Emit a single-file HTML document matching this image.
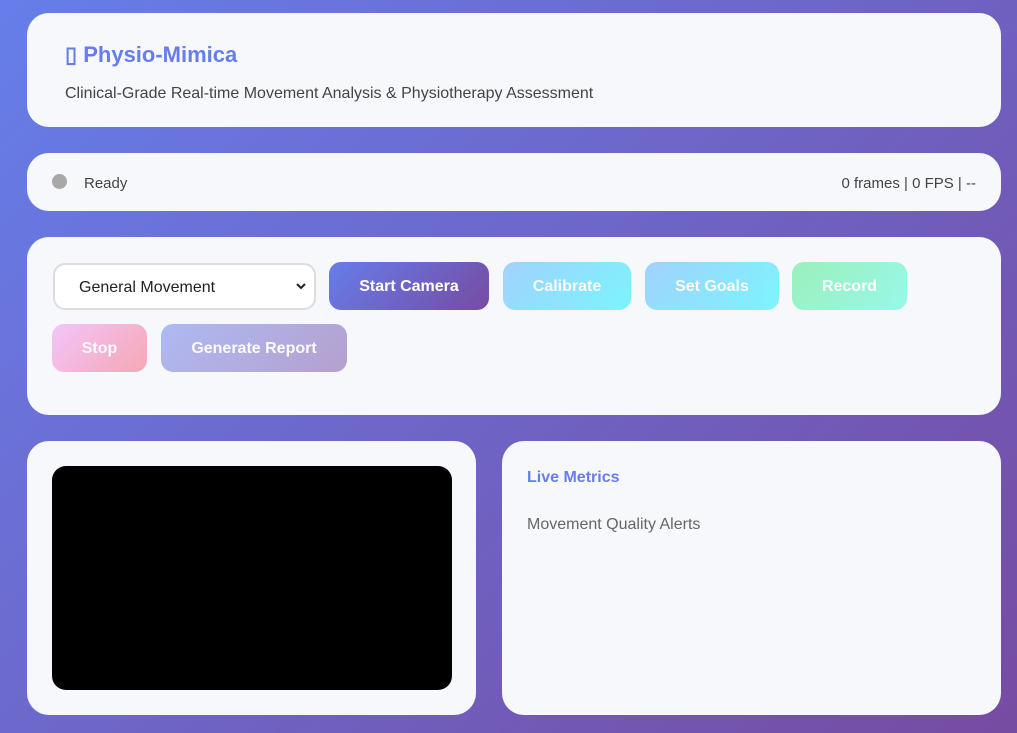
<!DOCTYPE html><html><head><style>
body{margin:0;width:1017px;height:733px;overflow:hidden;background:linear-gradient(135deg,#667eea,#764ba2);font-family:"Liberation Sans",sans-serif;position:relative}
.c{position:absolute;background:#f7f8fc;border-radius:22px}
.b{position:absolute;height:48px;border-radius:12px;color:#fff;font-weight:bold;font-size:16px;display:flex;align-items:center;justify-content:center;padding-top:2px;box-sizing:border-box}
.d{opacity:.5}
</style></head><body>
<div class="c" style="left:27px;top:13px;width:974px;height:114px">
<div style="position:absolute;left:38px;top:29px;font-size:22px;font-weight:bold;color:#667eea">▯ Physio-Mimica</div>
<div style="position:absolute;left:38px;top:72px;font-size:16px;color:#444">Clinical-Grade Real-time Movement Analysis &amp; Physiotherapy Assessment</div>
</div>
<div class="c" style="left:27px;top:153px;width:974px;height:58px">
<div style="position:absolute;left:25px;top:21px;width:15px;height:15px;border-radius:50%;background:#a8a8a8"></div>
<div style="position:absolute;left:57px;top:22px;font-size:15px;color:#444">Ready</div>
<div style="position:absolute;right:25px;top:22px;font-size:15px;color:#444">0 frames | 0 FPS | --</div>
</div>
<div class="c" style="left:27px;top:237px;width:974px;height:178px"></div>
<div style="position:absolute;left:53px;top:263px;width:259px;height:43px;border:2px solid #ddd;border-radius:12px;background:#fff;font-size:16px;color:#222"><span style="position:absolute;left:24px;top:14px">General Movement</span><svg style="position:absolute;right:8px;top:18px" width="10" height="7" viewBox="0 0 10 7"><path d="M1 1l4 4 4-4" fill="none" stroke="#222" stroke-width="2"/></svg></div>
<div class="b" style="left:329px;top:262px;width:160px;background:linear-gradient(135deg,#667eea,#764ba2)">Start Camera</div>
<div class="b d" style="left:503px;top:262px;width:128px;background:linear-gradient(135deg,#4facfe,#00f2fe)">Calibrate</div>
<div class="b d" style="left:645px;top:262px;width:134px;background:linear-gradient(135deg,#4facfe,#00f2fe)">Set Goals</div>
<div class="b d" style="left:792px;top:262px;width:115px;background:linear-gradient(135deg,#43e97b,#38f9d7)">Record</div>
<div class="b d" style="left:52px;top:324px;width:95px;background:linear-gradient(135deg,#f093fb,#f5576c)">Stop</div>
<div class="b d" style="left:161px;top:324px;width:186px;background:linear-gradient(135deg,#667eea,#764ba2)">Generate Report</div>
<div class="c" style="left:27px;top:441px;width:449px;height:274px">
<div style="position:absolute;left:25px;top:25px;width:400px;height:224px;background:#000;border-radius:14px"></div></div>
<div class="c" style="left:502px;top:441px;width:499px;height:274px">
<div style="position:absolute;left:25px;top:28px;font-size:16px;font-weight:bold;color:#667eea">Live Metrics</div>
<div style="position:absolute;left:25px;top:75px;font-size:16px;color:#666">Movement Quality Alerts</div></div>
</body></html>
